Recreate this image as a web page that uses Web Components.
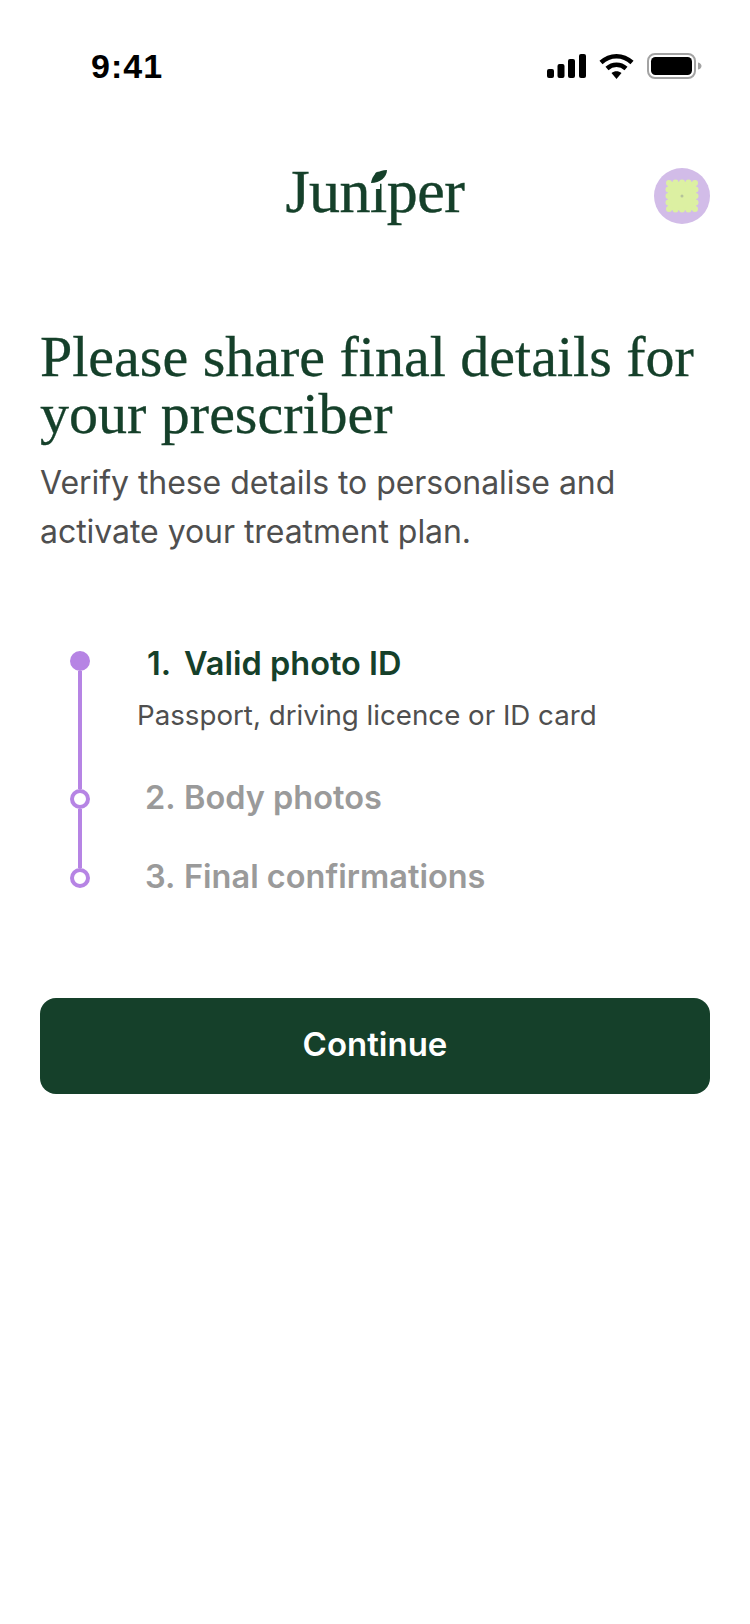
<!DOCTYPE html>
<html lang="en">
<head>
<meta charset="utf-8">
<title>Juniper</title>
<style>
    html, body { margin: 0; padding: 0; background: #fff; }
    body { font-family: "Inter", "Liberation Sans", sans-serif; }
</style>
</head>
<body>
<phone-screen>
    <status-bar></status-bar>
    <top-header></top-header>
    <intro-copy>
        <span slot="title">Please share final details for your prescriber</span>
        Verify these details to personalise and activate your treatment plan.
    </intro-copy>
    <step-list>
        <step-item state="active" label="1." title="Valid photo ID">Passport, driving licence or ID card</step-item>
        <step-item label="2." title="Body photos"></step-item>
        <step-item label="3." title="Final confirmations" last></step-item>
    </step-list>
    <primary-button>Continue</primary-button>
</phone-screen>

<script>
class PhoneScreen extends HTMLElement {
    constructor() {
        super();
        this.attachShadow({ mode: 'open' });
    }

    connectedCallback() {
        this.shadowRoot.innerHTML = `
            <style>
                :host {
                    display: flex;
                    flex-direction: column;
                    width: 750px;
                    height: 1624px;
                    overflow: hidden;
                    background: #fff;
                }
            </style>
            <slot></slot>
        `;
    }
}

class StatusBar extends HTMLElement {
    constructor() {
        super();
        this.attachShadow({ mode: 'open' });
    }

    connectedCallback() {
        this.shadowRoot.innerHTML = `
            <style>
                :host {
                    display: flex;
                    justify-content: space-between;
                    align-items: center;
                    height: 44px;
                    padding: 44px 48px 0 91px;
                }
                .time {
                    font-family: "Liberation Sans", sans-serif;
                    font-size: 34px;
                    font-weight: 700;
                    color: #000;
                    letter-spacing: 1px;
                }
                .icons {
                    display: flex;
                    align-items: center;
                    gap: 13px;
                }
                svg { display: block; }
            </style>
            <span class="time">9:41</span>
            <div class="icons">
                <svg width="39" height="24" viewBox="0 0 39 24">
                    <rect x="0" y="15" width="7" height="9" rx="2" fill="#000"/>
                    <rect x="10.500" y="10" width="7" height="14" rx="2" fill="#000"/>
                    <rect x="21" y="5" width="7" height="19" rx="2" fill="#000"/>
                    <rect x="32" y="0" width="7" height="24" rx="2" fill="#000"/>
                </svg>
                <svg width="35" height="26" viewBox="0 0 35 26">
                    <path d="M2 9.500 C11 1 24 1 33 9.500" fill="none" stroke="#000" stroke-width="4.500"/>
                    <path d="M8 15.500 C13.500 10.500 21.500 10.500 27 15.500" fill="none" stroke="#000" stroke-width="4.500"/>
                    <path d="M12.500 20 C15.500 17.500 19.500 17.500 22.500 20 L17.500 26 Z" fill="#000"/>
                </svg>
                <svg width="55" height="26" viewBox="0 0 55 26">
                    <rect x="1" y="1" width="47" height="24" rx="7" fill="none" stroke="#a3a3a3" stroke-width="2"/>
                    <rect x="4" y="4" width="41" height="18" rx="4.500" fill="#000"/>
                    <path d="M51 9.500 C53.500 10 54.500 11.500 54.500 13 C54.500 14.500 53.500 16 51 16.500 Z" fill="#a3a3a3"/>
                </svg>
            </div>
        `;
    }
}

class TopHeader extends HTMLElement {
    constructor() {
        super();
        this.attachShadow({ mode: 'open' });
    }

    connectedCallback() {
        this.shadowRoot.innerHTML = `
            <style>
                :host {
                    display: grid;
                    grid-template-columns: 56px 1fr 56px;
                    align-items: start;
                    margin-top: 80px;
                    padding: 0 40px;
                    height: 56px;
                }
                .logo {
                    grid-column: 2;
                    position: relative;
                    justify-self: center;
                    margin-top: -5px;
                    font-family: "Liberation Serif", serif;
                    font-size: 62px;
                    line-height: 56px;
                    color: #15402a;
                    letter-spacing: -0.5px;
                    -webkit-text-stroke: 0.4px #15402a;
                }
                .leaf {
                    position: absolute;
                    left: 81px;
                    top: 6px;
                    display: block;
                }
                .avatar {
                    grid-column: 3;
                    width: 56px;
                    height: 56px;
                    display: block;
                }
            </style>
            <div class="logo">Juniper
                <svg class="leaf" width="22" height="20" viewBox="0 0 22 20">
                    <rect x="2" y="8" width="12" height="12" fill="#fff"/>
                    <path d="M5 14 C6 6 12 1 21 1 C21 8 14 14 5 14 Z" fill="#15402a"/>
                </svg>
            </div>
            <svg class="avatar" viewBox="0 0 56 56">
                <circle cx="28" cy="28" r="28" fill="#d2bce8"/>
                <rect x="14" y="14" width="28" height="28" fill="#dcf0a2"/>
                <g fill="#dcf0a2">
                    <circle cx="15" cy="15" r="3"/><circle cx="21.500" cy="14.500" r="3"/><circle cx="28" cy="14.500" r="3"/><circle cx="34.500" cy="14.500" r="3"/><circle cx="41" cy="15" r="3"/>
                    <circle cx="15" cy="41" r="3"/><circle cx="21.500" cy="41.500" r="3"/><circle cx="28" cy="41.500" r="3"/><circle cx="34.500" cy="41.500" r="3"/><circle cx="41" cy="41" r="3"/>
                    <circle cx="14.500" cy="21.500" r="3"/><circle cx="14.500" cy="28" r="3"/><circle cx="14.500" cy="34.500" r="3"/>
                    <circle cx="41.500" cy="21.500" r="3"/><circle cx="41.500" cy="28" r="3"/><circle cx="41.500" cy="34.500" r="3"/>
                </g>
                <circle cx="28" cy="28" r="1.500" fill="#b5c39a"/>
            </svg>
        `;
    }
}

class IntroCopy extends HTMLElement {
    constructor() {
        super();
        this.attachShadow({ mode: 'open' });
    }

    connectedCallback() {
        this.shadowRoot.innerHTML = `
            <style>
                :host {
                    display: block;
                    margin-top: 104px;
                    padding: 0 40px;
                }
                h1 {
                    margin: 0;
                    font-family: "Liberation Serif", serif;
                    font-weight: 400;
                    font-size: 58px;
                    line-height: 57px;
                    color: #15402a;
                    -webkit-text-stroke: 0.3px #15402a;
                }
                p {
                    margin: 16px 0 0;
                    font-family: "Inter", "Liberation Sans", sans-serif;
                    font-size: 32px;
                    letter-spacing: -0.05px;
                    line-height: 49px;
                    color: #4f4f4f;
                }
            </style>
            <h1><slot name="title"></slot></h1>
            <p><slot></slot></p>
        `;
    }
}

class StepList extends HTMLElement {
    constructor() {
        super();
        this.attachShadow({ mode: 'open' });
    }

    connectedCallback() {
        this.shadowRoot.innerHTML = `
            <style>
                :host {
                    display: flex;
                    flex-direction: column;
                    margin-top: 95px;
                    padding: 0 40px 0 70px;
                }
            </style>
            <slot></slot>
        `;
    }
}

class StepItem extends HTMLElement {
    constructor() {
        super();
        this.attachShadow({ mode: 'open' });
    }

    connectedCallback() {
        const active = this.getAttribute('state') === 'active';
        const last = this.hasAttribute('last');
        this.shadowRoot.innerHTML = `
            <style>
                :host {
                    display: grid;
                    grid-template-columns: 20px 1fr;
                    column-gap: 47px;
                    min-height: ${active ? 138 : 79}px;
                }
                .rail {
                    display: flex;
                    flex-direction: column;
                    align-items: center;
                }
                .dot {
                    flex: none;
                    width: 20px;
                    height: 20px;
                    box-sizing: border-box;
                    border-radius: 50%;
                    border: 4px solid #b684e4;
                    background: ${active ? '#b684e4' : '#fff'};
                }
                .line {
                    flex: 1;
                    width: 4px;
                    background: #b684e4;
                }
                .title {
                    display: flex;
                    margin: ${active ? -3 : -7}px 0 0 ${active ? 10 : 8}px;
                    font-size: 32.5px;
                    line-height: 32px;
                    font-weight: 600;
                    color: ${active ? '#15402a' : '#9a9a9a'};
                }
                .label {
                    flex: none;
                    width: ${active ? 37 : 39}px;
                }
                .sub {
                    margin-top: 18px;
                    font-size: 27.7px;
                    line-height: 34px;
                    color: #4f4f4f;
                }
            </style>
            <div class="rail">
                <span class="dot"></span>
                ${last ? '' : '<span class="line"></span>'}
            </div>
            <div>
                <div class="title"><span class="label">${this.getAttribute('label')}</span><span>${this.getAttribute('title')}</span></div>
                ${active ? '<div class="sub"><slot></slot></div>' : ''}
            </div>
        `;
    }
}

class PrimaryButton extends HTMLElement {
    constructor() {
        super();
        this.attachShadow({ mode: 'open' });
    }

    connectedCallback() {
        this.shadowRoot.innerHTML = `
            <style>
                :host {
                    display: flex;
                    align-items: center;
                    justify-content: center;
                    box-sizing: border-box;
                    height: 96px;
                    margin: 51px 40px 0;
                    padding-bottom: 4px;
                    border-radius: 16px;
                    background: #15402a;
                    color: #fff;
                    font-family: "Inter", "Liberation Sans", sans-serif;
                    font-size: 33px;
                    font-weight: 600;
                }
            </style>
            <slot></slot>
        `;
    }
}

customElements.define('phone-screen', PhoneScreen);
customElements.define('status-bar', StatusBar);
customElements.define('top-header', TopHeader);
customElements.define('intro-copy', IntroCopy);
customElements.define('step-list', StepList);
customElements.define('step-item', StepItem);
customElements.define('primary-button', PrimaryButton);
</script>
</body>
</html>
